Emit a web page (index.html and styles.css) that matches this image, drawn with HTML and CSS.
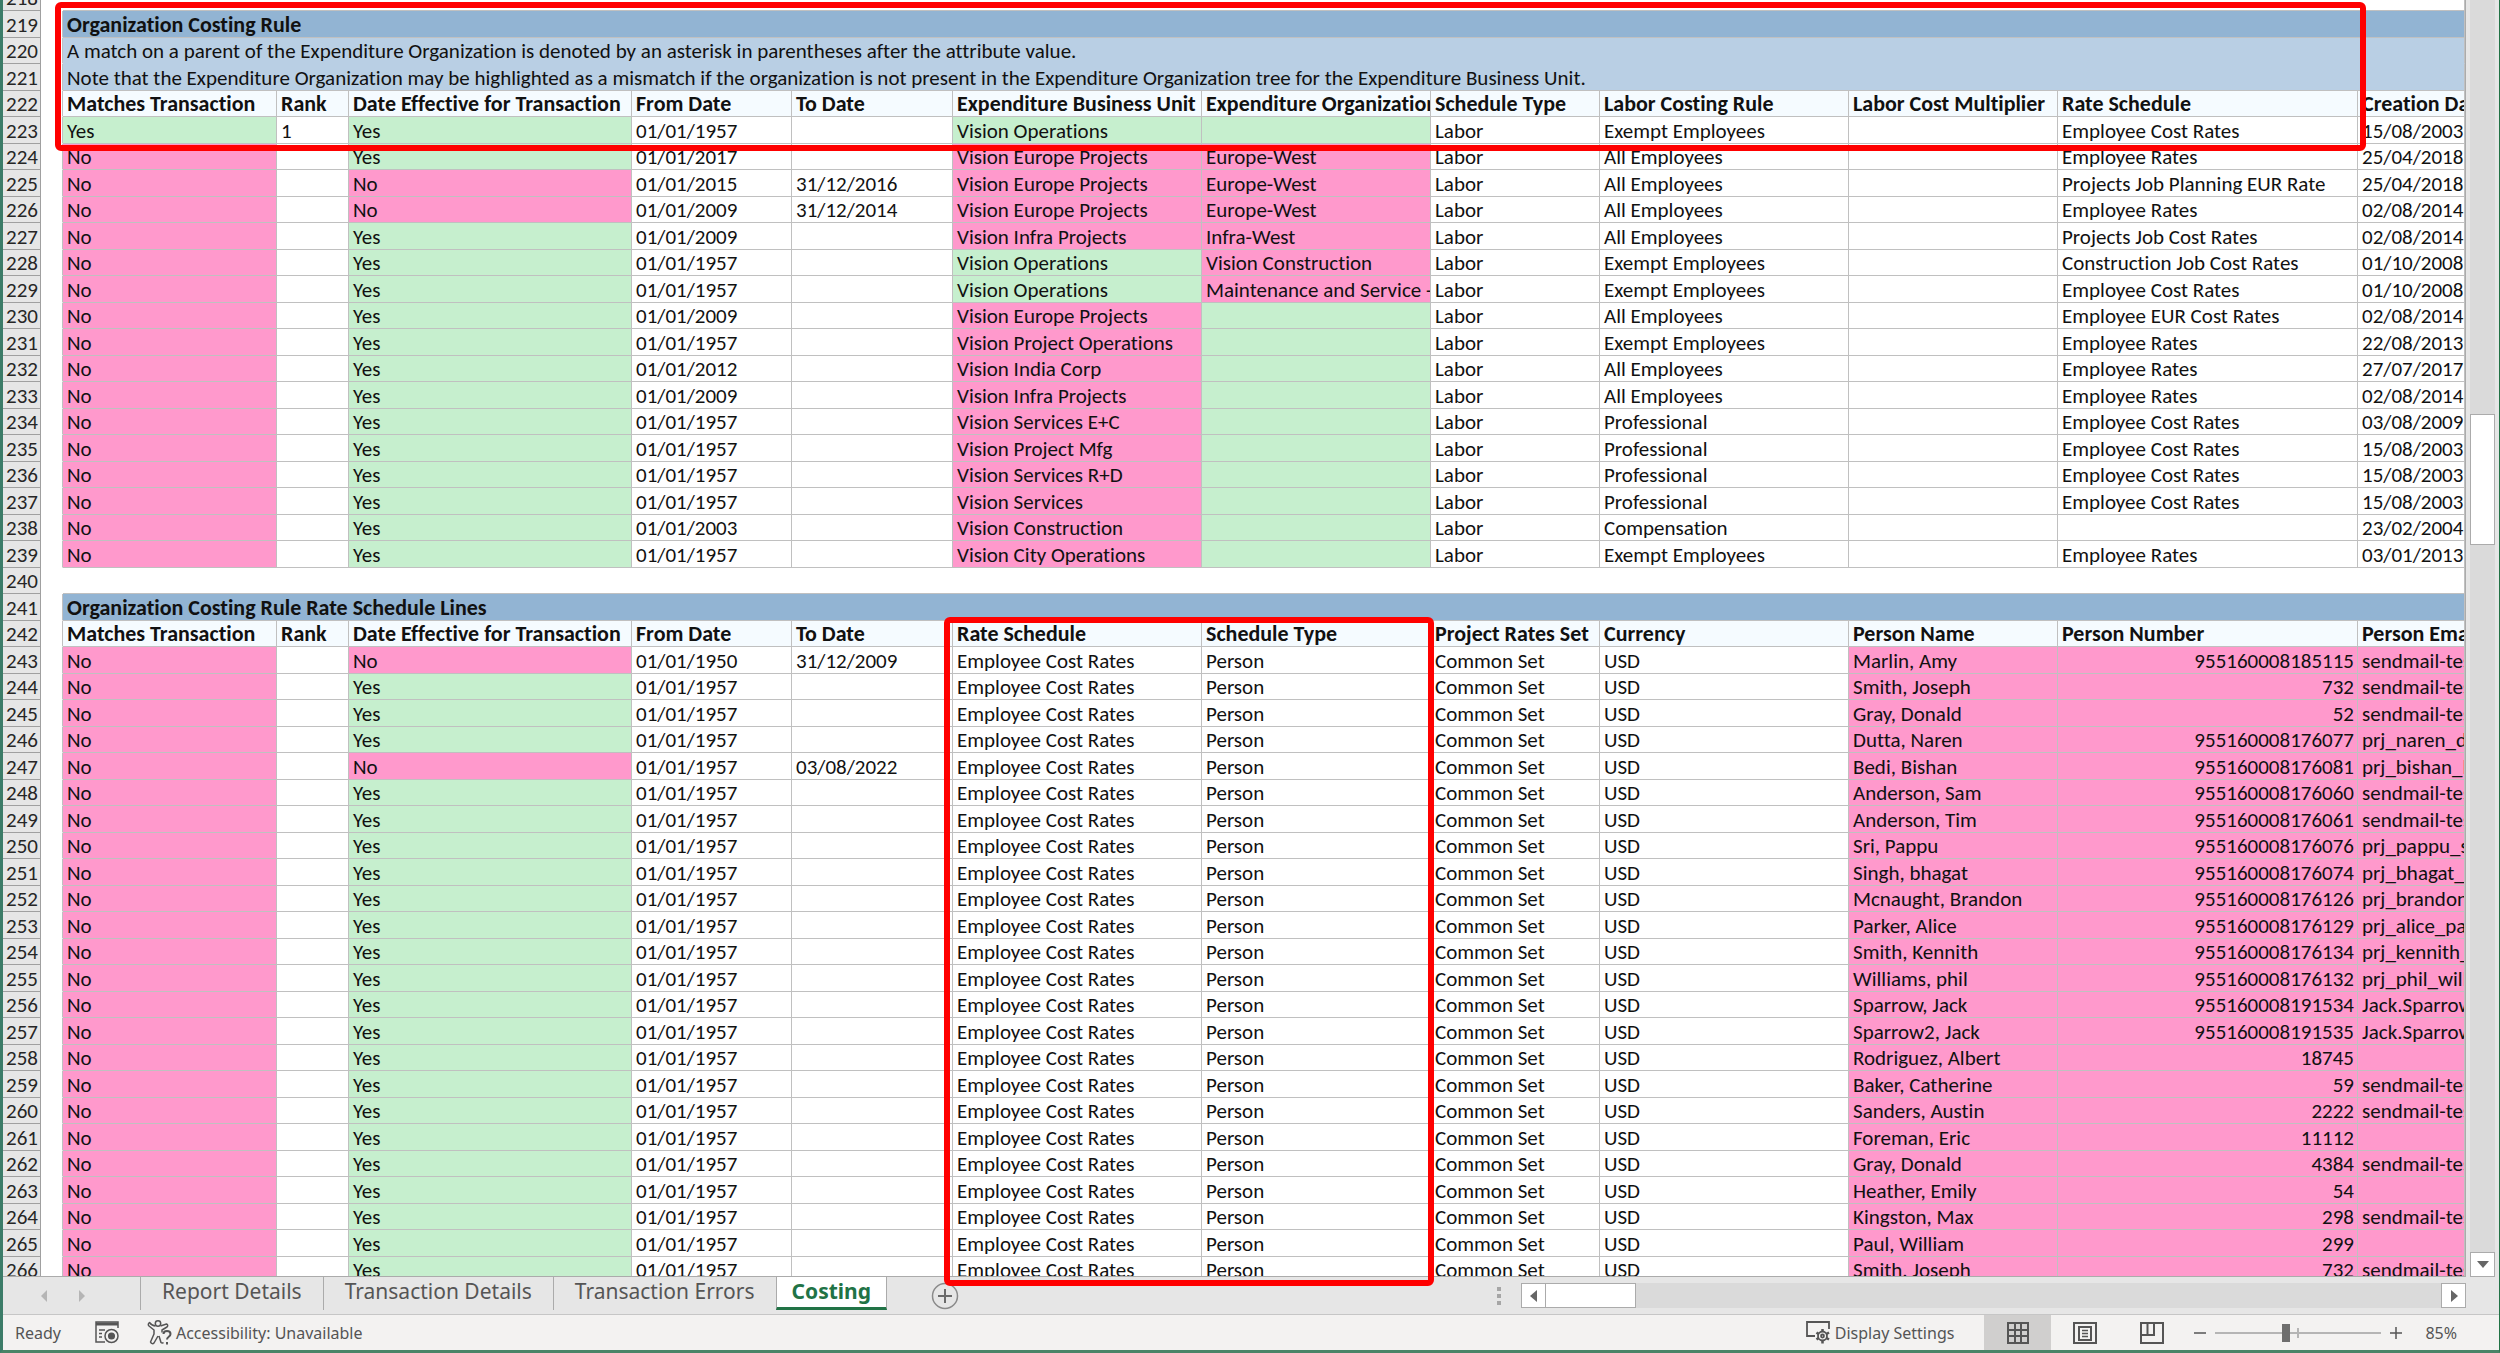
FILE: index.html
```html
<!DOCTYPE html>
<html lang="en">
<head>
<meta charset="utf-8">
<title>Costing</title>
<link rel="stylesheet" href="styles.css">
</head>
<body>
<div class="window">
<main class="workspace">
<div class="pane">
<table class="sheet">
<colgroup><col class="c-num"><col class="c-a"><col class="c-match"><col class="c-rank"><col class="c-eff"><col class="c-from"><col class="c-to"><col class="c-bu"><col class="c-org"><col class="c-type"><col class="c-rule"><col class="c-mult"><col class="c-rate"><col></colgroup>
<tbody>
<tr class="blank"><th>218<td><td colspan="12">
<tr class="title"><th>219<td><td colspan="12">Organization Costing Rule
<tr class="note"><th>220<td><td colspan="12">A match on a parent of the Expenditure Organization is denoted by an asterisk in parentheses after the attribute value.
<tr class="note last"><th>221<td><td colspan="12">Note that the Expenditure Organization may be highlighted as a mismatch if the organization is not present in the Expenditure Organization tree for the Expenditure Business Unit.
<tr class="head"><th>222<td><td>Matches Transaction<td>Rank<td>Date Effective for Transaction<td>From Date<td>To Date<td>Expenditure Business Unit<td>Expenditure Organization<td>Schedule Type<td>Labor Costing Rule<td>Labor Cost Multiplier<td>Rate Schedule<td>Creation Date
<tr><th>223<td><td class="ok">Yes<td>1<td class="ok">Yes<td>01/01/1957<td><td class="ok">Vision Operations<td class="ok"><td>Labor<td>Exempt Employees<td><td>Employee Cost Rates<td>15/08/2003
<tr><th>224<td><td class="bad">No<td><td class="ok">Yes<td>01/01/2017<td><td class="bad">Vision Europe Projects<td class="bad">Europe-West<td>Labor<td>All Employees<td><td>Employee Rates<td>25/04/2018
<tr><th>225<td><td class="bad">No<td><td class="bad">No<td>01/01/2015<td>31/12/2016<td class="bad">Vision Europe Projects<td class="bad">Europe-West<td>Labor<td>All Employees<td><td>Projects Job Planning EUR Rate<td>25/04/2018
<tr><th>226<td><td class="bad">No<td><td class="bad">No<td>01/01/2009<td>31/12/2014<td class="bad">Vision Europe Projects<td class="bad">Europe-West<td>Labor<td>All Employees<td><td>Employee Rates<td>02/08/2014
<tr><th>227<td><td class="bad">No<td><td class="ok">Yes<td>01/01/2009<td><td class="bad">Vision Infra Projects<td class="bad">Infra-West<td>Labor<td>All Employees<td><td>Projects Job Cost Rates<td>02/08/2014
<tr><th>228<td><td class="bad">No<td><td class="ok">Yes<td>01/01/1957<td><td class="ok">Vision Operations<td class="bad">Vision Construction<td>Labor<td>Exempt Employees<td><td>Construction Job Cost Rates<td>01/10/2008
<tr><th>229<td><td class="bad">No<td><td class="ok">Yes<td>01/01/1957<td><td class="ok">Vision Operations<td class="bad">Maintenance and Service -<td>Labor<td>Exempt Employees<td><td>Employee Cost Rates<td>01/10/2008
<tr><th>230<td><td class="bad">No<td><td class="ok">Yes<td>01/01/2009<td><td class="bad">Vision Europe Projects<td class="ok"><td>Labor<td>All Employees<td><td>Employee EUR Cost Rates<td>02/08/2014
<tr><th>231<td><td class="bad">No<td><td class="ok">Yes<td>01/01/1957<td><td class="bad">Vision Project Operations<td class="ok"><td>Labor<td>Exempt Employees<td><td>Employee Rates<td>22/08/2013
<tr><th>232<td><td class="bad">No<td><td class="ok">Yes<td>01/01/2012<td><td class="bad">Vision India Corp<td class="ok"><td>Labor<td>All Employees<td><td>Employee Rates<td>27/07/2017
<tr><th>233<td><td class="bad">No<td><td class="ok">Yes<td>01/01/2009<td><td class="bad">Vision Infra Projects<td class="ok"><td>Labor<td>All Employees<td><td>Employee Rates<td>02/08/2014
<tr><th>234<td><td class="bad">No<td><td class="ok">Yes<td>01/01/1957<td><td class="bad">Vision Services E+C<td class="ok"><td>Labor<td>Professional<td><td>Employee Cost Rates<td>03/08/2009
<tr><th>235<td><td class="bad">No<td><td class="ok">Yes<td>01/01/1957<td><td class="bad">Vision Project Mfg<td class="ok"><td>Labor<td>Professional<td><td>Employee Cost Rates<td>15/08/2003
<tr><th>236<td><td class="bad">No<td><td class="ok">Yes<td>01/01/1957<td><td class="bad">Vision Services R+D<td class="ok"><td>Labor<td>Professional<td><td>Employee Cost Rates<td>15/08/2003
<tr><th>237<td><td class="bad">No<td><td class="ok">Yes<td>01/01/1957<td><td class="bad">Vision Services<td class="ok"><td>Labor<td>Professional<td><td>Employee Cost Rates<td>15/08/2003
<tr><th>238<td><td class="bad">No<td><td class="ok">Yes<td>01/01/2003<td><td class="bad">Vision Construction<td class="ok"><td>Labor<td>Compensation<td><td><td>23/02/2004
<tr><th>239<td><td class="bad">No<td><td class="ok">Yes<td>01/01/1957<td><td class="bad">Vision City Operations<td class="ok"><td>Labor<td>Exempt Employees<td><td>Employee Rates<td>03/01/2013
<tr class="blank"><th>240<td><td colspan="12">
<tr class="title"><th>241<td><td colspan="12">Organization Costing Rule Rate Schedule Lines
<tr class="head"><th>242<td><td>Matches Transaction<td>Rank<td>Date Effective for Transaction<td>From Date<td>To Date<td>Rate Schedule<td>Schedule Type<td>Project Rates Set<td>Currency<td>Person Name<td>Person Number<td>Person Email
<tr><th>243<td><td class="bad">No<td><td class="bad">No<td>01/01/1950<td>31/12/2009<td>Employee Cost Rates<td>Person<td>Common Set<td>USD<td class="bad">Marlin, Amy<td class="bad num">955160008185115<td class="bad">sendmail-tes
<tr><th>244<td><td class="bad">No<td><td class="ok">Yes<td>01/01/1957<td><td>Employee Cost Rates<td>Person<td>Common Set<td>USD<td class="bad">Smith, Joseph<td class="bad num">732<td class="bad">sendmail-tes
<tr><th>245<td><td class="bad">No<td><td class="ok">Yes<td>01/01/1957<td><td>Employee Cost Rates<td>Person<td>Common Set<td>USD<td class="bad">Gray, Donald<td class="bad num">52<td class="bad">sendmail-tes
<tr><th>246<td><td class="bad">No<td><td class="ok">Yes<td>01/01/1957<td><td>Employee Cost Rates<td>Person<td>Common Set<td>USD<td class="bad">Dutta, Naren<td class="bad num">955160008176077<td class="bad">prj_naren_d
<tr><th>247<td><td class="bad">No<td><td class="bad">No<td>01/01/1957<td>03/08/2022<td>Employee Cost Rates<td>Person<td>Common Set<td>USD<td class="bad">Bedi, Bishan<td class="bad num">955160008176081<td class="bad">prj_bishan_b
<tr><th>248<td><td class="bad">No<td><td class="ok">Yes<td>01/01/1957<td><td>Employee Cost Rates<td>Person<td>Common Set<td>USD<td class="bad">Anderson, Sam<td class="bad num">955160008176060<td class="bad">sendmail-tes
<tr><th>249<td><td class="bad">No<td><td class="ok">Yes<td>01/01/1957<td><td>Employee Cost Rates<td>Person<td>Common Set<td>USD<td class="bad">Anderson, Tim<td class="bad num">955160008176061<td class="bad">sendmail-tes
<tr><th>250<td><td class="bad">No<td><td class="ok">Yes<td>01/01/1957<td><td>Employee Cost Rates<td>Person<td>Common Set<td>USD<td class="bad">Sri, Pappu<td class="bad num">955160008176076<td class="bad">prj_pappu_s
<tr><th>251<td><td class="bad">No<td><td class="ok">Yes<td>01/01/1957<td><td>Employee Cost Rates<td>Person<td>Common Set<td>USD<td class="bad">Singh, bhagat<td class="bad num">955160008176074<td class="bad">prj_bhagat_
<tr><th>252<td><td class="bad">No<td><td class="ok">Yes<td>01/01/1957<td><td>Employee Cost Rates<td>Person<td>Common Set<td>USD<td class="bad">Mcnaught, Brandon<td class="bad num">955160008176126<td class="bad">prj_brandon
<tr><th>253<td><td class="bad">No<td><td class="ok">Yes<td>01/01/1957<td><td>Employee Cost Rates<td>Person<td>Common Set<td>USD<td class="bad">Parker, Alice<td class="bad num">955160008176129<td class="bad">prj_alice_pa
<tr><th>254<td><td class="bad">No<td><td class="ok">Yes<td>01/01/1957<td><td>Employee Cost Rates<td>Person<td>Common Set<td>USD<td class="bad">Smith, Kennith<td class="bad num">955160008176134<td class="bad">prj_kennith_
<tr><th>255<td><td class="bad">No<td><td class="ok">Yes<td>01/01/1957<td><td>Employee Cost Rates<td>Person<td>Common Set<td>USD<td class="bad">Williams, phil<td class="bad num">955160008176132<td class="bad">prj_phil_will
<tr><th>256<td><td class="bad">No<td><td class="ok">Yes<td>01/01/1957<td><td>Employee Cost Rates<td>Person<td>Common Set<td>USD<td class="bad">Sparrow, Jack<td class="bad num">955160008191534<td class="bad">Jack.Sparrow
<tr><th>257<td><td class="bad">No<td><td class="ok">Yes<td>01/01/1957<td><td>Employee Cost Rates<td>Person<td>Common Set<td>USD<td class="bad">Sparrow2, Jack<td class="bad num">955160008191535<td class="bad">Jack.Sparrow
<tr><th>258<td><td class="bad">No<td><td class="ok">Yes<td>01/01/1957<td><td>Employee Cost Rates<td>Person<td>Common Set<td>USD<td class="bad">Rodriguez, Albert<td class="bad num">18745<td class="bad">
<tr><th>259<td><td class="bad">No<td><td class="ok">Yes<td>01/01/1957<td><td>Employee Cost Rates<td>Person<td>Common Set<td>USD<td class="bad">Baker, Catherine<td class="bad num">59<td class="bad">sendmail-tes
<tr><th>260<td><td class="bad">No<td><td class="ok">Yes<td>01/01/1957<td><td>Employee Cost Rates<td>Person<td>Common Set<td>USD<td class="bad">Sanders, Austin<td class="bad num">2222<td class="bad">sendmail-tes
<tr><th>261<td><td class="bad">No<td><td class="ok">Yes<td>01/01/1957<td><td>Employee Cost Rates<td>Person<td>Common Set<td>USD<td class="bad">Foreman, Eric<td class="bad num">11112<td class="bad">
<tr><th>262<td><td class="bad">No<td><td class="ok">Yes<td>01/01/1957<td><td>Employee Cost Rates<td>Person<td>Common Set<td>USD<td class="bad">Gray, Donald<td class="bad num">4384<td class="bad">sendmail-tes
<tr><th>263<td><td class="bad">No<td><td class="ok">Yes<td>01/01/1957<td><td>Employee Cost Rates<td>Person<td>Common Set<td>USD<td class="bad">Heather, Emily<td class="bad num">54<td class="bad">
<tr><th>264<td><td class="bad">No<td><td class="ok">Yes<td>01/01/1957<td><td>Employee Cost Rates<td>Person<td>Common Set<td>USD<td class="bad">Kingston, Max<td class="bad num">298<td class="bad">sendmail-tes
<tr><th>265<td><td class="bad">No<td><td class="ok">Yes<td>01/01/1957<td><td>Employee Cost Rates<td>Person<td>Common Set<td>USD<td class="bad">Paul, William<td class="bad num">299<td class="bad">
<tr><th>266<td><td class="bad">No<td><td class="ok">Yes<td>01/01/1957<td><td>Employee Cost Rates<td>Person<td>Common Set<td>USD<td class="bad">Smith, Joseph<td class="bad num">732<td class="bad">sendmail-tes
</tbody>
</table>
</div>
<div class="vscroll">
<div class="vtrack"><span class="v-before"></span><span class="v-thumb"></span><span class="v-after"></span></div>
<button class="scroll-btn" aria-label="Scroll down"><svg width="12" height="8" viewBox="0 0 12 8"><path d="M0 0h12L6 7z" fill="#666"/></svg></button>
</div>
</main>

<div class="tabbar">
<div class="nav">
<button aria-label="Previous sheet"><svg width="8" height="12" viewBox="0 0 8 12"><path d="M7 0v12L1 6z" fill="#b5b5b5"/></svg></button>
<button aria-label="Next sheet"><svg width="8" height="12" viewBox="0 0 8 12"><path d="M1 0v12l6-6z" fill="#b5b5b5"/></svg></button>
</div>
<nav class="tabs">
<button class="tab">Report Details</button>
<button class="tab">Transaction Details</button>
<button class="tab">Transaction Errors</button>
<button class="tab active">Costing</button>
</nav>
<button class="add" aria-label="New sheet"><svg width="28" height="28" viewBox="0 0 28 28" fill="none"><circle cx="14" cy="14" r="12.5" stroke="#8a8a8a" stroke-width="1.5"/><path d="M14 7v14M7 14h14" stroke="#6a6a6a" stroke-width="2"/></svg></button>
<svg class="grip" width="4" height="18" viewBox="0 0 4 18" fill="#a6a6a6"><path d="M0 0h4v4H0zM0 7h4v4H0zM0 14h4v4H0z"/></svg>
<div class="hscroll">
<button class="scroll-btn" aria-label="Scroll left"><svg width="8" height="12" viewBox="0 0 8 12"><path d="M7 0v12L0 6z" fill="#666"/></svg></button>
<span class="h-thumb"></span><span class="h-track"></span>
<button class="scroll-btn" aria-label="Scroll right"><svg width="8" height="12" viewBox="0 0 8 12"><path d="M1 0v12l7-6z" fill="#666"/></svg></button>
</div>
</div>

<footer class="status">
<span class="ready">Ready</span>
<button class="icon-btn macro" aria-label="Record macro"><svg width="24" height="23" viewBox="0 0 24 23" fill="none" stroke="#555" stroke-width="1.5"><path d="M23 7V1H1v20h9"/><path d="M1 3h22" stroke-width="3"/><path d="M4 9h6M4 12.500h3M4 16h3"/><circle cx="16.500" cy="15" r="6.500"/><circle cx="16.500" cy="15" r="2.800" fill="#555"/></svg></button>
<button class="label-btn access"><svg width="25" height="25" viewBox="0 0 25 25" fill="none" stroke="#555" stroke-width="1.500" stroke-linejoin="round"><circle cx="11" cy="3.500" r="2.700"/><path d="M8.500 6C6 6 4 4.500 2.500 2.500 1 3.500 1 5 2 6l5 4v4l-3.500 8c1 2 2.500 2 3.500 1l4-7M13.500 6l6-2c1.500.5 1.500 2 .5 3l-5 3v2.500M12 16l2 6.500c1 1 2 .5 2.500 0"/><path d="M16.500 14c0-4 7-4 7 0 0 3-3.500 2.500-3.500 5.500" stroke-width="2"/><path d="M20 22v2.500" stroke-width="2"/></svg><span>Accessibility: Unavailable</span></button>
<span class="fill"></span>
<button class="label-btn display"><svg width="25" height="23" viewBox="0 0 25 23" fill="none" stroke="#555" stroke-width="1.800"><path d="M9 15H1V1h22v7"/><circle cx="16.500" cy="15" r="4.500"/><circle cx="16.500" cy="15" r="1.500"/><path d="M16.500 8v3M16.500 19v3.500M10.500 11.500l2 1.500M20.500 17l2.500 1.500M10.500 18.500l2-1.500M20.500 13l2.500-1.500" stroke-width="2.500"/></svg><span>Display Settings</span></button>
<button class="view on" aria-label="Normal view"><svg width="22" height="22" viewBox="0 0 22 22" fill="none" stroke="#555" stroke-width="2"><path d="M1 1h20v20H1zM1 8h20M1 14h20M8 1v20M14 1v20"/></svg></button>
<button class="view" aria-label="Page layout view"><svg width="24" height="22" viewBox="0 0 24 22" fill="none" stroke="#555" stroke-width="2"><path d="M1 1h22v20H1zM6 5h12v13H6z"/><path d="M9 8.500h6M9 11.500h6M9 14.500h6" stroke-width="1.500"/></svg></button>
<button class="view" aria-label="Page break preview"><svg width="24" height="22" viewBox="0 0 24 22" fill="none" stroke="#555" stroke-width="2"><path d="M1 1h22v20H1zM1 13h13V1M7.500 1v12"/></svg></button>
<button class="zoom-btn" aria-label="Zoom out"><svg width="14" height="14" viewBox="0 0 14 14" stroke="#555" stroke-width="1.500"><path d="M1 7h12"/></svg></button>
<input class="slider" type="range" min="0" max="100" value="42" aria-label="Zoom">
<button class="zoom-btn" aria-label="Zoom in"><svg width="14" height="14" viewBox="0 0 14 14" stroke="#555" stroke-width="1.500"><path d="M1 7h12M7 1v12"/></svg></button>
<span class="percent">85%</span>
</footer>
<div class="mark mark-rule"></div>
<div class="mark mark-lines"></div>
</div>
</body>
</html>
```
FILE: styles.css
```css
* { box-sizing: border-box; }
body { margin: 0; background: #fff; }
button { margin: 0; padding: 0; border: 0; background: none; font: inherit; color: inherit; display: flex; align-items: center; justify-content: center; }
svg { display: block; flex: none; }

.window {
  position: relative;
  display: flex;
  flex-direction: column;
  height: 100vh;
  overflow: hidden;
  border-left: 3px solid #3c7c68;
  border-right: 1px solid #217346;
  border-bottom: 3px solid #4a8468;
  background: #e6e6e6;
}

/* worksheet */
.workspace { flex: 1; display: flex; min-height: 0; }
.pane { flex: 1; min-width: 0; overflow: hidden; background: #fff; border-right: 1px solid #ababab; border-bottom: 1px solid #ababab; }
.sheet {
  width: 100%;
  min-width: 2461px;
  margin-top: -15px;
  table-layout: fixed;
  border-collapse: separate;
  border-spacing: 0;
  font-family: Carlito, Calibri, Lato, sans-serif;
  font-size: 21px;
  line-height: 22px;
  font-variant-ligatures: none;
  color: #111;
}
.c-num { width: 38px; }
.c-a { width: 22px; }
.c-match { width: 214px; }
.c-rank { width: 72px; }
.c-eff { width: 283px; }
.c-from { width: 160px; }
.c-to { width: 161px; }
.c-bu { width: 249px; }
.c-org { width: 229px; }
.c-type { width: 169px; }
.c-rule { width: 249px; }
.c-mult { width: 209px; }
.c-rate { width: 300px; }
.sheet tr { height: 26px; }
.sheet tr:nth-child(even) { height: 27px; }
.sheet td, .sheet th { padding: 0 3px 1px 4px; white-space: nowrap; overflow: hidden; text-align: left; vertical-align: bottom; border-right: 1px solid #c0c0c0; border-bottom: 1px solid #c0c0c0; }
.sheet th { padding: 0 2px 1px 3px; font-weight: 400; color: #262626; background: #e6e6e6; border-color: #a0a0a0; }
.sheet td:nth-child(2) { border-color: transparent; border-right-color: #c0c0c0; }
.sheet .num { text-align: right; }
.sheet .ok { background: #c6efce; }
.sheet .bad { background: #ff99cc; }
.sheet .title td:last-child { background: #92b4d3; font-size: 22px; font-weight: 700; }
.sheet .note td:last-child { background: #b9cfe4; border-bottom-color: #b9cfe4; }
.sheet .note.last td:last-child { border-bottom-color: #c0c0c0; }
.sheet .head td:nth-child(n+3) { background: #f5fbff; font-size: 22px; font-weight: 700; }
.sheet .blank td:nth-child(2) { border-right-color: transparent; }

.vscroll { display: flex; flex-direction: column; width: 33px; padding: 0 4px; }
.vtrack { flex: 1; display: flex; flex-direction: column; background: #dadada; }
.v-before { flex: 415; }
.v-thumb { flex: 129; background: #fff; border: 1px solid #ababab; }
.v-after { flex: 708; }
.scroll-btn { width: 25px; height: 25px; background: #fff; border: 1px solid #ababab; }

/* sheet tabs */
.tabbar { display: flex; height: 38px; color: #555; font-family: "Noto Sans", "Open Sans", sans-serif; font-size: 21px; border-bottom: 1px solid #c6c6c6; }
.nav { display: flex; gap: 30px; padding: 0 54px 0 37px; }
.tabs { display: flex; }
.tab { height: 33px; padding: 0 21px 5px; border-left: 1px solid #ababab; line-height: 28px; }
.tab.active { padding: 0 15px 2px; background: #fff; color: #217346; font-weight: 700; border-right: 1px solid #ababab; border-bottom: 3px solid #217346; }
.add { width: 28px; height: 38px; margin-left: 44px; }
.grip { margin: 10px 20px 0 auto; }
.hscroll { display: flex; width: 945px; height: 25px; margin: 6px 33px 0 0; }
.h-thumb { width: 90px; background: #fff; border: 1px solid #ababab; border-left: 0; }
.h-track { flex: 1; background: #dadada; }

/* status bar */
.status { display: flex; align-items: center; height: 35px; padding: 0 42px 0 12px; background: #f3f2f1; color: #555; font-family: "Noto Sans", "Open Sans", sans-serif; font-size: 16px; }
.macro { margin-left: 34px; }
.label-btn { gap: 4px; height: 35px; }
.access { margin-left: 28px; }
.fill { flex: 1; }
.display { margin-right: 30px; }
.view { width: 67px; height: 35px; }
.view.on { background: #d0cfce; }
.zoom-btn { width: 14px; height: 35px; margin: 0 8px; }
.percent { margin-left: 14px; }
.slider {
  appearance: none;
  width: 166px;
  height: 20px;
  margin: 0;
  background: linear-gradient(#b5b5b5, #b5b5b5) 0 50% / 100% 2px no-repeat, linear-gradient(#b5b5b5, #b5b5b5) 50% 50% / 2px 10px no-repeat;
}
.slider::-webkit-slider-thumb { appearance: none; width: 8px; height: 18px; background: #6e6e6e; border: 0; }

/* highlight frames drawn over the cells */
.mark { position: absolute; border: 6px solid #f00; border-radius: 6px; pointer-events: none; }
.mark-rule { left: 52px; top: 2px; width: 2311px; height: 149px; }
.mark-lines { left: 941px; top: 617px; width: 490px; height: 669px; }
```
